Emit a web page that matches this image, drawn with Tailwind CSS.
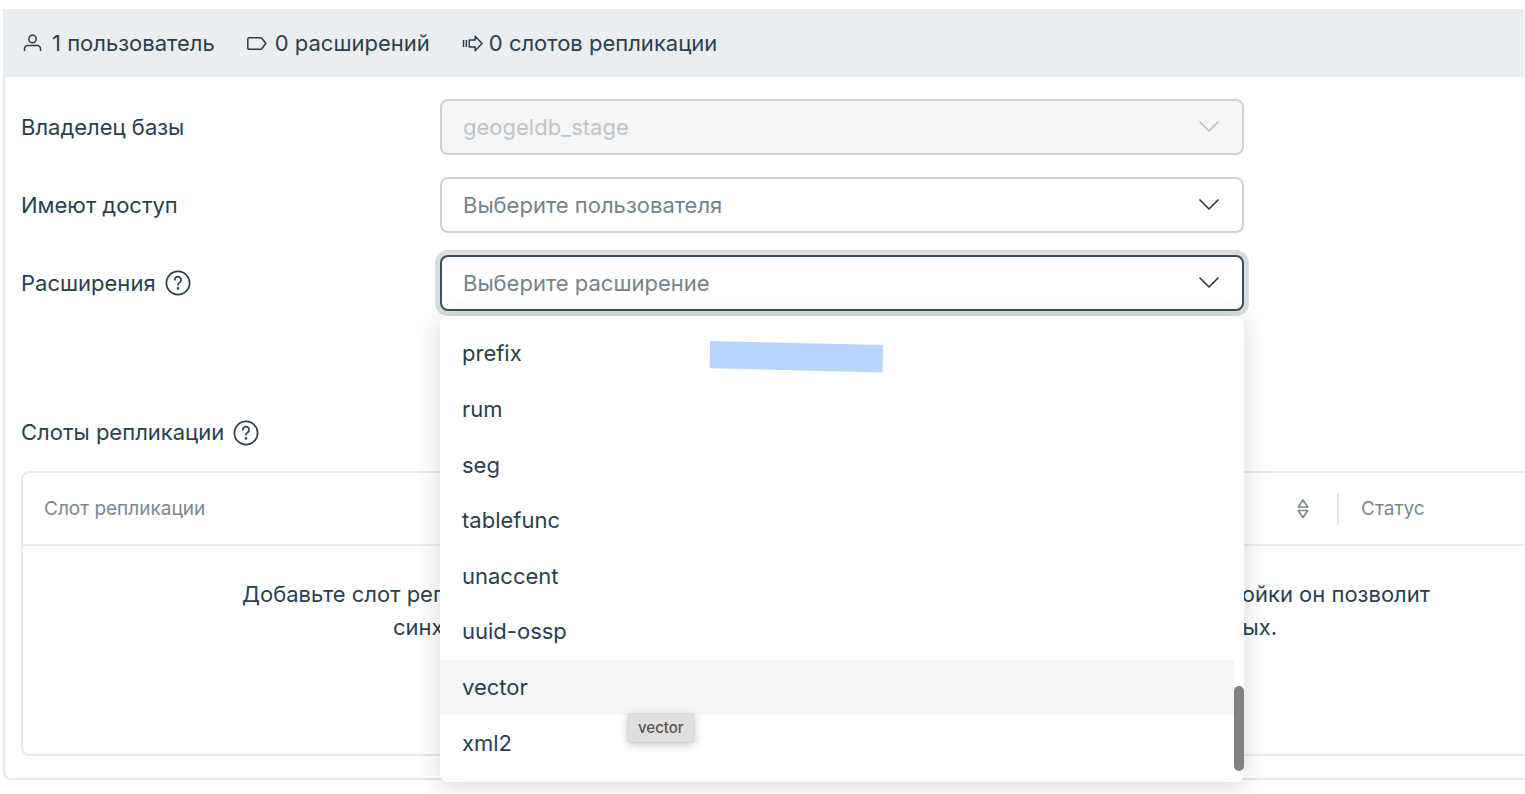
<!DOCTYPE html>
<html lang="ru">
<head>
<meta charset="utf-8">
<meta name="viewport" content="width=device-width, initial-scale=1">
<title>База данных</title>
<script src="https://cdn.jsdelivr.net/npm/@tailwindcss/browser@4"></script>
</head>
<body class="bg-white font-['Inter','Noto_Sans',sans-serif] text-[22px] leading-[33px] text-[#2a3f4d]">
<main class="min-h-screen pt-[9px] pr-px pb-3 pl-[3px]">
  <section class="rounded-bl-lg border-b-2 border-l-2 border-[#e8ebed]">
    <header class="flex h-[68px] items-center gap-8 bg-[#eaeef1] pl-[17px]">
      <div class="flex items-center gap-2">
        <svg class="size-[22px]" viewBox="0 0 22 22" fill="none" stroke="currentColor" stroke-width="1.5"><circle cx="10.5" cy="7" r="3.700"/><path d="M2.500 19v-2.300a3.200 3.200 0 0 1 3.200-3.200h9.600a3.200 3.200 0 0 1 3.200 3.200V19"/></svg>
        <span>1 пользователь</span>
      </div>
      <div class="flex items-center gap-2">
        <svg class="h-[22px] w-5" viewBox="0 0 20 22" fill="none" stroke="currentColor" stroke-width="1.5" stroke-linejoin="round"><path d="M2.200 5.700h11.300c.5 0 .9.2 1.200.6l4.200 5.200-4.200 5.200c-.3.4-.7.6-1.200.6H2.200c-.8 0-1.400-.6-1.400-1.400V7.100c0-.8.6-1.400 1.400-1.400z"/></svg>
        <span>0 расширений</span>
      </div>
      <div class="flex items-center gap-1.5">
        <svg class="h-[22px] w-[21px]" viewBox="0 0 21 22" fill="none" stroke="currentColor" stroke-width="1.5" stroke-linejoin="round"><path d="M1.500 8v7M4.300 8v7M7.200 8h6V4.200L20 11.500l-6.800 7.300V15h-6z"/></svg>
        <span>0 слотов репликации</span>
      </div>
    </header>

    <form class="grid grid-cols-[419px_minmax(0,804px)] items-center gap-y-[22px] pt-[22px] pl-4">
      <label for="owner">Владелец базы</label>
      <div class="relative">
        <select id="owner" disabled class="block h-14 w-full appearance-none rounded-lg border-2 border-[#cdd2d6] bg-[#f4f6f8] pr-16 pl-[21px] text-[#bdc4c9] opacity-100"><option>geogeldb_stage</option></select>
        <svg class="pointer-events-none absolute top-[18px] right-6 h-5 w-[22px] text-[#bdc4c9]" viewBox="0 0 22 20" fill="none" stroke="currentColor" stroke-width="1.700" stroke-linecap="round" stroke-linejoin="round"><path d="M2 5l9 9 9-9"/></svg>
      </div>

      <label for="access">Имеют доступ</label>
      <div class="relative">
        <select id="access" class="block h-14 w-full appearance-none rounded-lg border-2 border-[#cdd2d6] bg-white pr-16 pl-[21px] text-[#75838c]"><option>Выберите пользователя</option></select>
        <svg class="pointer-events-none absolute top-[18px] right-6 h-5 w-[22px]" viewBox="0 0 22 20" fill="none" stroke="currentColor" stroke-width="1.700" stroke-linecap="round" stroke-linejoin="round"><path d="M2 5l9 9 9-9"/></svg>
      </div>

      <div class="flex items-center gap-[9px]">
        <label for="ext">Расширения</label>
        <button type="button" aria-label="Справка о расширениях"><svg class="size-[26px]" viewBox="0 0 26 26" fill="none" stroke="currentColor" stroke-width="1.700" stroke-linecap="round"><circle cx="13" cy="13" r="11.600"/><path d="M9.900 9.800a3.100 3.100 0 1 1 4.700 2.600c-1.100.7-1.600 1.200-1.600 2.300"/><circle cx="13" cy="18.400" r=".5" fill="currentColor"/></svg></button>
      </div>
      <div class="relative">
        <select id="ext" class="block h-14 w-full appearance-none rounded-lg border-2 border-[#3b4e5b] bg-white pr-16 pl-[21px] text-[#75838c] ring-[5px] ring-[#d8dde0]"><option>Выберите расширение</option></select>
        <svg class="pointer-events-none absolute top-[18px] right-6 h-5 w-[22px]" viewBox="0 0 22 20" fill="none" stroke="currentColor" stroke-width="1.700" stroke-linecap="round" stroke-linejoin="round"><path d="M2 5l9 9 9-9"/></svg>

        <div class="absolute top-[61px] left-0 z-10 w-full rounded-lg bg-white pt-2.5 pb-[11px] shadow-[0_4px_24px_rgba(0,0,0,0.16)]">
          <ul role="listbox" aria-label="Расширения" class="mr-2.5 grid h-[445px] grid-rows-8">
            <li role="option" class="flex items-center pl-[22px]">prefix</li>
            <li role="option" class="flex items-center pl-[22px]">rum</li>
            <li role="option" class="flex items-center pl-[22px]">seg</li>
            <li role="option" class="flex items-center pl-[22px]">tablefunc</li>
            <li role="option" class="flex items-center pl-[22px]">unaccent</li>
            <li role="option" class="flex items-center pl-[22px]">uuid-ossp</li>
            <li role="option" class="flex items-center bg-[#f4f6f8] pl-[22px]">vector</li>
            <li role="option" class="flex items-center pl-[22px]">xml2</li>
          </ul>
          <svg class="absolute top-6 left-[269px] h-[34px] w-[175px]" viewBox="0 0 175 34" aria-hidden="true"><path d="M1 1l173 4-.5 27.500L.7 28.300z" fill="#b9d5fb"/></svg>
          <div class="absolute right-0 bottom-[11px] h-[85px] w-2.5 rounded-full bg-[#808080]"></div>
          <div role="tooltip" class="absolute top-[398px] left-[188px] rounded-xs bg-[#e0dfdd] px-2.5 text-[15px] leading-7 font-medium text-[#555555] shadow-[0_2px_10px_rgba(0,0,0,0.25),0_0_1px_rgba(0,0,0,0.4)]">vector</div>
        </div>
      </div>
    </form>

    <div class="pt-[105px] pb-[22px] pl-4">
      <div class="flex items-center gap-[9px]">
        <h2>Слоты репликации</h2>
        <button type="button" aria-label="Справка о слотах репликации"><svg class="size-[26px]" viewBox="0 0 26 26" fill="none" stroke="currentColor" stroke-width="1.700" stroke-linecap="round"><circle cx="13" cy="13" r="11.600"/><path d="M9.900 9.800a3.100 3.100 0 1 1 4.700 2.600c-1.100.7-1.600 1.200-1.600 2.300"/><circle cx="13" cy="18.400" r=".5" fill="currentColor"/></svg></button>
      </div>
      <div class="mt-[22px] rounded-l-lg border-2 border-r-0 border-[#e8ebed]">
        <table class="w-full table-fixed border-collapse">
          <thead class="text-[19px] text-[#7a8790]">
            <tr class="h-[72px] border-b-2 border-[#e8ebed]">
              <th class="pr-[26px] pl-[21px] text-left font-normal">
                <div class="flex items-center justify-between">
                  <span>Слот репликации</span>
                  <button type="button" aria-label="Сортировать"><svg class="h-[22px] w-4" viewBox="0 0 16 22" fill="none" stroke="currentColor" stroke-width="1.600" stroke-linejoin="round"><path d="M8 2l4.700 7H3.300zM8 19.500l4.700-7H3.300z"/></svg></button>
                </div>
              </th>
              <th class="w-[187px] text-left font-normal"><div class="border-l-2 border-[#e1e5e8] pl-[22px] leading-8">Статус</div></th>
            </tr>
          </thead>
          <tbody>
            <tr>
              <td colspan="2" class="h-[209px] pt-8 pr-[94px] pl-[219px] align-top">
                <p class="flex justify-between"><span>Добавьте слот репликации</span><span>После настройки он позволит</span></p>
                <p class="flex justify-between pr-[153px] pl-[151px]"><span>синхронизировать</span><span>базы данных.</span></p>
              </td>
            </tr>
          </tbody>
        </table>
      </div>
    </div>
  </section>
</main>
</body>
</html>
